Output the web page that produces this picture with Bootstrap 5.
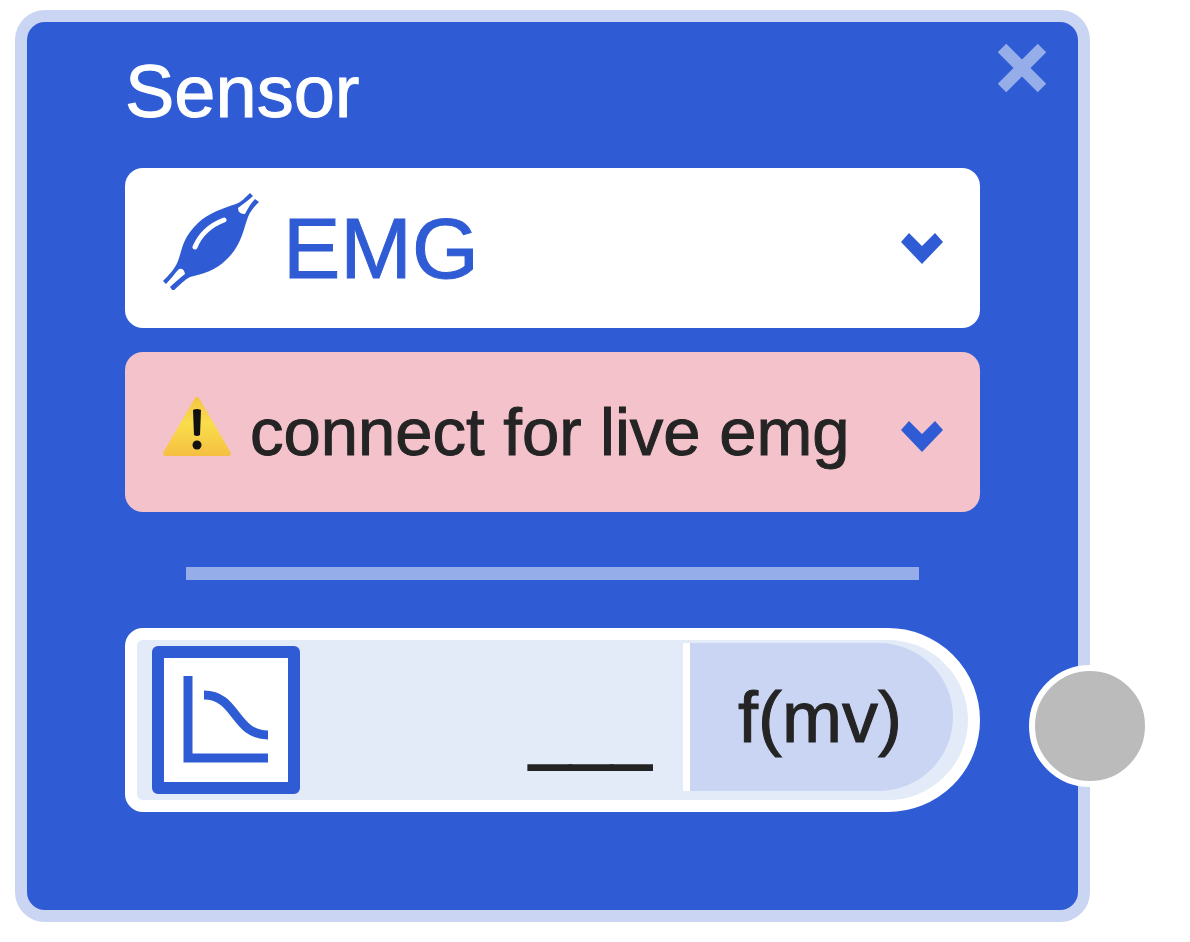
<!DOCTYPE html>
<html lang="en">
<head>
<meta charset="utf-8">
<meta name="viewport" content="width=device-width, initial-scale=1">
<title>Sensor</title>
<link href="https://cdn.jsdelivr.net/npm/bootstrap@5.3.0/dist/css/bootstrap.min.css" rel="stylesheet">
<style>
  :root { --blue: #2f5bd4; --blue-mid: #95ade8; --blue-light: #c9d5f3; --blue-pale: #e3eaf8; --ink: #242424; }
  body { font-family: "Liberation Sans", Arial, sans-serif; background: #fff; color: var(--ink); -webkit-text-stroke: 1px currentColor; }
  .stage { padding: 10px 100px 20px 15px; }
  .node { background: var(--blue); border: 12px solid var(--blue-light); border-radius: 30px; }
  .node-head { padding: 21px 31px 29px 98px; }
  .node-title { font-size: 74px; line-height: 98px; height: 96px; }
  .node-body { padding: 0 98px 98px; }
  .plain-btn { background: none; border: 0; padding: 0; line-height: 0; }
  .picker { height: 160px; border-radius: 18px; padding: 0 37px; }
  .picker + .picker { margin-top: 24px; }
  .picker select { appearance: none; border: 0; background: transparent; padding: 0; outline: 0; }
  .picker-source { background: #fff; }
  .picker-source select { color: var(--blue); font-size: 86px; line-height: 104px; height: 104px; margin-left: 21px; }
  .picker-status { background: #f4c2cb; }
  .picker-status select { color: var(--ink); font-size: 67px; line-height: 84px; height: 84px; margin-left: 18px; }
  .divider { height: 13px; margin: 55px 61px 48px; background: var(--blue-mid); border: 0; opacity: 1; }
  .output { height: 184px; border: 12px solid #fff; border-radius: 18px 92px 92px 18px; background: var(--blue-pale); padding: 3px 15px 9px; }
  .curve-btn { width: 148px; height: 148px; border: 12px solid var(--blue); border-radius: 6px; background: #fff; padding: 0; line-height: 0; margin-top: 5px; }
  .reading { background: transparent; border: 0; outline: 0; padding: 24px 30px 0 0; font-size: 74px; line-height: 92px; height: 116px; color: var(--ink); -webkit-text-stroke: 2px currentColor; }
  .unit { width: 270px; height: 148px; border: 0; border-left: 7px solid #fff; border-radius: 0 74px 74px 0; background: var(--blue-light); color: var(--ink); font-size: 72px; line-height: 92px; padding: 0 3px 0 0; }
  .port { width: 122px; height: 122px; border: 6px solid #fff; border-radius: 50%; background: #bbb; right: -171px; top: 37px; padding: 0; }
</style>
</head>
<body>
<main class="stage">
  <section class="node" aria-labelledby="node-title">
    <header class="node-head d-flex justify-content-between align-items-start">
      <h1 class="node-title fw-normal text-white m-0" id="node-title">Sensor</h1>
      <button type="button" class="plain-btn" aria-label="Remove">
        <svg width="50" height="50" viewBox="0 0 50 50"><path d="M5 5 45 45M45 5 5 45" stroke="#95ade8" stroke-width="12" fill="none"/></svg>
      </button>
    </header>
    <div class="node-body">
      <div class="picker picker-source d-flex align-items-center">
        <svg class="flex-shrink-0 mb-3" width="100" height="100" viewBox="0 0 100 100" aria-hidden="true">
          <path d="M88 3C83 8 79 12 74 14C62 18 46 23 36 33C20 48 20 61 16 71C13 79 6 86 1 91L4 94C9 89 13 83 17 79Q22 78 23 84C18 88 13 92 8 97L11 101C17 96 22 90 28 87C41 84 54 80 64 70C80 55 81 40 86 27C89 20 93 16 97 12L93 9C89 13 86 18 83 24Q76 24 76 18C81 14 87 10 91 6Z" fill="#2f5bd4"/>
          <path d="M33 57Q41 38 62 30" fill="none" stroke="#fff" stroke-width="5" stroke-linecap="round"/>
        </svg>
        <select class="flex-grow-1" aria-label="Sensor type"><option>EMG</option></select>
        <svg class="flex-shrink-0" width="42" height="31" viewBox="0 0 42 31" aria-hidden="true"><path d="M0 9 8 0 21 13 34 0 42 9 21 31Z" fill="#2f5bd4"/></svg>
      </div>
      <div class="picker picker-status d-flex align-items-center">
        <svg class="flex-shrink-0 mb-2" width="70" height="62" viewBox="0 0 70 62" aria-hidden="true">
          <defs><linearGradient id="warn" x2="0" y2="1"><stop stop-color="#f5c344"/><stop offset=".45" stop-color="#fadd4b"/><stop offset="1" stop-color="#f5bf42"/></linearGradient></defs>
          <path d="M33 1Q35-2 37 1L69 56Q69 59 66 59H4Q1 59 1 56Z" fill="url(#warn)"/>
          <path d="M31 13Q35 11 39 13L38 38Q35 40 32 38Z" fill="#111"/><circle cx="35" cy="48" r="4.500" fill="#111"/>
        </svg>
        <select class="flex-grow-1" aria-label="Connection status"><option>connect for live emg</option></select>
        <svg class="flex-shrink-0 mt-2" width="42" height="31" viewBox="0 0 42 31" aria-hidden="true"><path d="M0 9 8 0 21 13 34 0 42 9 21 31Z" fill="#2f5bd4"/></svg>
      </div>
      <hr class="divider">
      <div class="position-relative">
        <div class="output d-flex align-items-center">
          <button type="button" class="curve-btn flex-shrink-0" aria-label="Transfer curve">
            <svg width="124" height="124" viewBox="0 0 124 124"><path d="M24 18V100H104M40 37C73 37 70 77 104 77" fill="none" stroke="#2f5bd4" stroke-width="9"/></svg>
          </button>
          <input class="reading flex-grow-1 text-end" type="text" value="___" size="4" aria-label="Reading">
          <button type="button" class="unit flex-shrink-0">f(mv)</button>
        </div>
        <button type="button" class="port position-absolute" aria-label="Output port"></button>
      </div>
    </div>
  </section>
</main>
<script src="https://cdn.jsdelivr.net/npm/bootstrap@5.3.0/dist/js/bootstrap.bundle.min.js"></script>
</body>
</html>
